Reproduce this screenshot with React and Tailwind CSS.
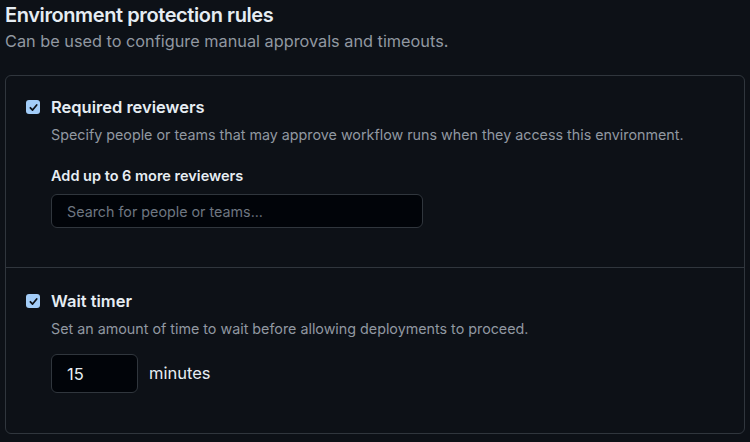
import React, { useState } from "react";

const Check = ({ checked, onChange }) => (
  <button
    type="button"
    onClick={onChange}
    className={`mt-[1px] flex h-[14px] w-[14px] shrink-0 items-center justify-center rounded-[3px] ${
      checked ? "bg-[#a3cdf8]" : "border border-[#6e7681] bg-transparent"
    }`}
  >
    {checked && (
      <svg width="11" height="11" viewBox="0 0 12 12" fill="none">
        <path
          d="M2.6 6.3 L5 8.8 L9.5 3.2"
          stroke="#0d1117"
          strokeWidth="1.9"
          strokeLinecap="round"
          strokeLinejoin="round"
        />
      </svg>
    )}
  </button>
);

const App = () => {
  const [reviewers, setReviewers] = useState(true);
  const [timer, setTimer] = useState(true);
  const [minutes, setMinutes] = useState("15");

  return (
    <div
      className="h-[442px] w-[750px] overflow-hidden bg-[#0d1117] px-[5px] text-[#e6edf3]"
      style={{ fontFamily: "Inter, 'Noto Sans', sans-serif" }}
    >
      <h2 className="pt-[2px] text-[20px] font-semibold leading-[26px] tracking-[-0.4px]">
        Environment protection rules
      </h2>
      <p className="mt-[2px] text-[16.3px] leading-[22px] text-[#9198a1]">
        Can be used to configure manual approvals and timeouts.
      </p>

      <div className="mt-[23px] rounded-[6px] border border-[#30363d]">
        {/* reviewers */}
        <div className="flex gap-[11px] px-[20px] pb-[39px] pt-[23px]">
          <Check checked={reviewers} onChange={() => setReviewers(!reviewers)} />
          <div className="flex-1">
            <div className="text-[16.5px] font-semibold leading-[16px]">Required reviewers</div>
            <p className="mt-[10px] text-[14.3px] leading-[20px] text-[#9198a1]">
              Specify people or teams that may approve workflow runs when they access this environment.
            </p>
            <div className="mt-[21px] text-[14.5px] font-semibold leading-[20px]">
              Add up to 6 more reviewers
            </div>
            <input
              type="text"
              placeholder="Search for people or teams..."
              className="mt-[8px] h-[34px] w-[372px] rounded-[6px] border border-[#30363d] bg-[#010409] px-[15px] text-[14.3px] text-[#e6edf3] outline-none placeholder:text-[#6e7681]"
            />
          </div>
        </div>

        {/* wait timer */}
        <div className="flex gap-[11px] border-t border-[#30363d] px-[20px] pb-[40px] pt-[25px]">
          <Check checked={timer} onChange={() => setTimer(!timer)} />
          <div className="flex-1">
            <div className="text-[16.5px] font-semibold leading-[16px]">Wait timer</div>
            <p className="mt-[10px] text-[14.3px] leading-[20px] text-[#9198a1]">
              Set an amount of time to wait before allowing deployments to proceed.
            </p>
            <div className="mt-[15px] flex items-center gap-[11px]">
              <input
                type="text"
                value={minutes}
                onChange={(e) => setMinutes(e.target.value)}
                className="h-[39px] w-[87px] rounded-[6px] border border-[#30363d] bg-[#010409] px-[15px] text-[16.5px] text-[#e6edf3] outline-none"
              />
              <span className="text-[16.5px]">minutes</span>
            </div>
          </div>
        </div>
      </div>
    </div>
  );
};

export default App;
